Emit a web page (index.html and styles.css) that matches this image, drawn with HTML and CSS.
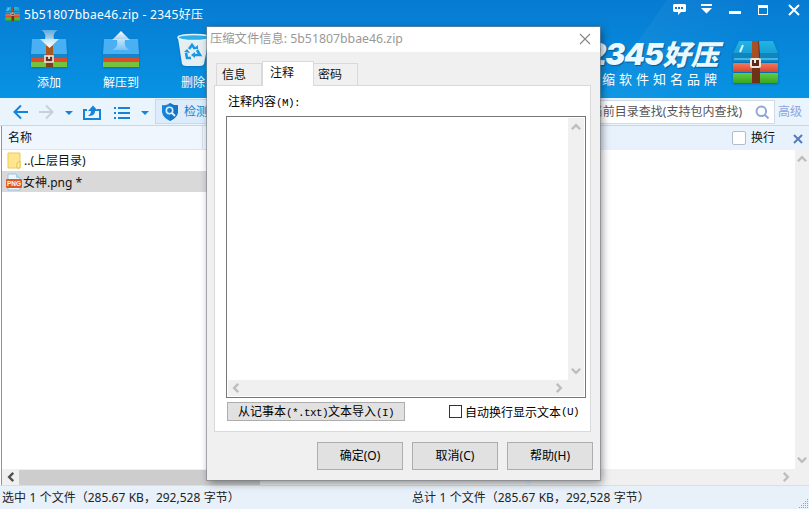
FILE: index.html
```html
<!DOCTYPE html>
<html lang="zh-CN">
<head>
<meta charset="utf-8">
<title>5b51807bbae46.zip - 2345好压</title>
<link rel="stylesheet" href="styles.css">
</head>
<body>
<svg width="0" height="0" class="defs" aria-hidden="true">
  <defs>
    <linearGradient id="arrow" x1="0" y1="0" x2="0" y2="1"><stop offset="0" stop-color="#fff" stop-opacity=".35"/><stop offset="1" stop-color="#fff"/></linearGradient>
    <linearGradient id="arrowUp" x1="0" y1="1" x2="0" y2="0"><stop offset="0" stop-color="#fff" stop-opacity=".25"/><stop offset="1" stop-color="#fff"/></linearGradient>
    <linearGradient id="cyan" x1="0" y1="0" x2="0" y2="1"><stop offset="0" stop-color="#22b4e4"/><stop offset="1" stop-color="#18a0d6"/></linearGradient>
    <linearGradient id="red" x1="0" y1="0" x2="0" y2="1"><stop offset="0" stop-color="#f5785a"/><stop offset="1" stop-color="#d9452c"/></linearGradient>
    <linearGradient id="green" x1="0" y1="0" x2="0" y2="1"><stop offset="0" stop-color="#62cc40"/><stop offset="1" stop-color="#38a624"/></linearGradient>
    <symbol id="up" viewBox="0 0 8 6"><path d="M.7 4.800 4 1.500l3.300 3.300" fill="none" stroke="currentColor" stroke-width="1.900"/></symbol>
    <symbol id="books" viewBox="0 0 46 43">
      <path d="M7 0h34l5 12H1z" fill="url(#cyan)"/><path d="M1 12h45v9H1z" fill="#1184bb"/><path d="M2 17h44v2H2z" fill="#3fb5e6"/>
      <rect x="1" y="22" width="45" height="9" rx="1" fill="url(#red)"/><rect x="1" y="32" width="45" height="10" rx="1" fill="url(#green)"/>
      <path d="M20 0h7l1 14v28h-8z" fill="#713118"/><path d="M20 0h6l1 17h-7z" fill="#a85025"/>
      <rect x="19" y="18" width="9" height="8" rx="1" fill="#5b2716" stroke="#eee4dc" stroke-width="2"/><path d="M23 18v4" stroke="#eee" stroke-width="2"/>
      <path d="m8 11 3-7" stroke="#d9f4ff" stroke-width="2"/>
    </symbol>
  </defs>
</svg>
<div class="window">
  <header class="head">
    <div class="titlebar">
      <svg class="appicon" viewBox="0 0 46 43" preserveAspectRatio="none"><use href="#books"/></svg>
      <span class="apptitle">5b51807bbae46.zip - 2345好压</span>
      <svg class="winctl" width="128" height="20" viewBox="0 0 128 20" fill="#fff">
        <path d="M1 4h11l1 1v6l-1 1H8l-3 3v-3H1l-1-1V5z"/><path d="M2 7h2v2H2zM5 7h2v2H5zM8 7h2v2H8z" fill="#0a78d2"/>
        <path d="M28 4h11v2H28zM28 8h11l-5.500 5.500z"/><path d="M56 11h12v3H56z"/>
        <path d="M85 5h10v10H85zM86 8v6h8V8z" fill-rule="evenodd"/>
        <path d="m116 5 10 10m0-10-10 10" stroke="#fff" stroke-width="2"/>
      </svg>
    </div>
    <div class="mainbar">
      <div class="tool">
        <svg width="38" height="40" viewBox="0 0 38 40"><path d="M2 10h34l1 15H1z" fill="#49b0f4"/><path d="M1 25h36v4H1z" fill="#1485c9"/><path d="M1 29h36v4H1z" fill="#d84d2c"/><path d="M1 33h36v5H1z" fill="#76c23c"/><path d="M16 17h7v21h-7z" fill="#a9571c"/><path d="M16 31h7v7h-7z" fill="#7d3e1a"/><path d="M11 1h17c-4 2-5 6-4 9h5l-9.500 9L10 10h5c1-3 0-7-4-9" fill="url(#arrow)"/><rect x="15" y="27" width="8" height="6" fill="#673023" stroke="#eee6df" stroke-width="1.600"/><path d="M19 27v3" stroke="#fff" stroke-width="1.500"/></svg>
        <span>添加</span>
      </div>
      <div class="tool">
        <svg width="38" height="40" viewBox="0 0 38 40"><path d="M2 10h34l1 15H1z" fill="#49b0f4"/><path d="M1 25h36v4H1z" fill="#1485c9"/><path d="M1 29h36v4H1z" fill="#d84d2c"/><path d="M1 33h36v5H1z" fill="#76c23c"/><path d="M10 21c5-2 6-6 5-10h-5l9-9 9 9h-5c-1 4 0 8 5 10z" fill="url(#arrowUp)"/></svg>
        <span>解压到</span>
      </div>
      <div class="tool">
        <svg width="38" height="40" viewBox="0 0 38 40"><path d="m4 9 4 26q1 2 4 2h14q3 0 4-2l5-26z" fill="#e6eef2"/><ellipse cx="20" cy="8.500" rx="16" ry="3" fill="#2faee8" stroke="#dff5ff" stroke-width="1.500"/><g fill="none" stroke="#1899e2" stroke-width="2.600"><path d="m15 20 3-4 3 4M23 21l3 5h-5M17 29h-4l-1-5"/></g><path d="M19 20h5v-4zM21 23v6l-4-3zM10 23l3-3 3 4z" fill="#1899e2"/></svg>
        <span>删除</span>
      </div>
      <div class="brand">
        <div class="brandtext"><b><span>2345</span>好压</b><i>压缩软件知名品牌</i></div>
        <svg class="books" width="46" height="43"><use href="#books"/></svg>
      </div>
    </div>
  </header>
  <nav class="nav">
    <svg width="160" height="27" viewBox="0 0 160 27" fill="none" stroke="#1583d8" stroke-width="2">
      <path d="M28 14H15m6-6.500L14.500 14l6.500 6.500"/><path d="M39 14h13m-6-6.500 6.500 6.500-6.500 6.500" stroke="#c9cfda"/>
      <path d="M65 13h8l-4 4zM141 13h8l-4 4z" fill="#1583d8" stroke="none"/>
      <path d="M87 12h-3v9h16v-9h-3"/><path d="M88 18c1-1 3-2 3-5h-3l5-5.500 5 5.500h-3c0 4-3 5-7 5" fill="#1583d8" stroke="none"/>
      <path d="M118 10h12M118 15h12M118 20h12M114 10h2M114 15h2M114 20h2"/>
    </svg>
    <div class="scan"><svg width="18" height="20" viewBox="0 0 18 20"><path d="M9 1q4 3 8 2v7q-1 6-8 9-7-3-8-9V3q4 1 8-2z" fill="#1683db"/><path d="M9 1q4 3 8 2v7q-1 6-8 9z" fill="#1474c5"/><circle cx="8.500" cy="8.500" r="3.200" fill="none" stroke="#d9efff" stroke-width="1.600"/><path d="m11 11 3 3" stroke="#d9efff" stroke-width="2"/></svg><span>检测</span></div>
    <div class="search"><span>当前目录查找(支持包内查找)</span><svg width="15" height="15" viewBox="0 0 15 15" fill="none" stroke="#8fa5db" stroke-width="2"><circle cx="6.300" cy="6.300" r="4.800"/><path d="m10 10 3.500 3.500"/></svg></div>
    <span class="adv">高级</span>
  </nav>
  <main class="body">
    <section class="files">
      <div class="colhead"><span>名称</span></div>
      <div class="rows">
        <div class="row"><svg width="15" height="18" viewBox="0 0 15 18"><path d="M1 1h12v15H1z" fill="#ffe58e" stroke="#ebcb55"/><path d="M10 16v-5l3-2v7z" fill="#fff0af" stroke="#e6c346"/></svg><span class="up">..(上层目录)</span></div>
        <div class="row selected"><svg width="16" height="18" viewBox="0 0 16 18"><path d="M2 1h8l4 4v12H2z" fill="#edf6fc" stroke="#9ac5e2"/><path d="M10 1v4h4" fill="#a6d6f2"/><rect y="6" width="16" height="9" rx="1" fill="#de5a24"/><text class="pngtag" x="1" y="13.300" textLength="14" lengthAdjust="spacingAndGlyphs">PNG</text></svg><span class="png">女神.png *</span></div>
      </div>
      <div class="hscroll"><svg class="dark turnleft" width="10" height="8"><use href="#up"/></svg><div class="thumb"></div></div>
    </section>
    <div class="split"></div>
    <section class="preview">
      <div class="previewhead"><i class="check"></i><span>换行</span><svg width="10" height="10" viewBox="0 0 10 10"><path d="m1 1 8 8m0-8L1 9" stroke="#527dbb" stroke-width="2"/></svg></div>
      <div class="previewbody"><div class="vscroll"><svg width="10" height="8"><use href="#up"/></svg><svg class="turndown" width="10" height="8"><use href="#up"/></svg></div></div>
      <div class="phscroll"><svg class="turnright" width="10" height="8"><use href="#up"/></svg></div>
    </section>
  </main>
  <footer class="status">
    <span class="s1">选中 1 个文件（285.67 KB，292,528 字节）</span><span class="s2">总计 1 个文件（285.67 KB，292,528 字节）</span>
    <svg class="grip" width="10" height="10" fill="#9ba4ad"><path d="M8 0h1v1H8zM6 2h1v1H6zM8 2h1v1H8zM4 4h1v1H4zM6 4h1v1H6zM8 4h1v1H8zM2 6h1v1H2zM4 6h1v1H4zM6 6h1v1H6zM8 6h1v1H8zM0 8h1v1H0zM2 8h1v1H2zM4 8h1v1H4zM6 8h1v1H6zM8 8h1v1H8z"/></svg>
  </footer>
</div>
<div class="dialog" role="dialog">
  <div class="dtitle"><span>压缩文件信息: 5b51807bbae46.zip</span><svg width="12" height="12" viewBox="0 0 12 12"><path d="m1 1 10 10m0-10L1 11" stroke="#858585" stroke-width="1.100"/></svg></div>
  <div class="tabs"><span class="tab">信息</span><span class="tab active">注释</span><span class="tab last">密码</span></div>
  <div class="panel">
    <label class="label mono">注释内容<span>(M):</span></label>
    <div class="memo">
      <div class="mv"><svg width="10" height="8"><use href="#up"/></svg><svg class="turndown" width="10" height="8"><use href="#up"/></svg></div>
      <div class="mh"><svg class="turnleft" width="10" height="8"><use href="#up"/></svg><svg class="turnright" width="10" height="8"><use href="#up"/></svg></div>
    </div>
    <div class="options"><button class="import mono">从记事本<span>(*.txt)</span>文本导入<span>(I)</span></button><label class="wrap mono"><i></i>自动换行显示文本<span>(U)</span></label></div>
  </div>
  <div class="actions"><button>确定(O)</button><button>取消(C)</button><button>帮助(H)</button></div>
</div>
</body>
</html>
```
FILE: styles.css
```css
* { box-sizing: border-box; }
body { margin: 0; width: 809px; height: 509px; overflow: hidden; font: 12px/16px "Noto Sans", "Noto Sans CJK SC", sans-serif; color: #111; white-space: nowrap; position: relative; }
svg { display: block; flex: none; }
.defs { position: absolute; }
.window { height: 509px; display: flex; flex-direction: column; background: #e8f1fa; }
.head { height: 98px; flex: none; color: #fff; background: linear-gradient(125deg, transparent 76%, #ffffff0a 76%, transparent 88%), linear-gradient(#067bd2, #0893e3); }
.titlebar { height: 29px; display: flex; align-items: flex-start; padding: 0 8px 0 5px; }
.appicon { width: 15px; height: 14px; margin-top: 7px; }
.apptitle { margin: 7px 0 0 4px; font-size: 12px; letter-spacing: .3px; }
.winctl { margin-left: auto; }
.mainbar { height: 69px; display: flex; }
.tool { width: 72px; flex: none; display: flex; flex-direction: column; align-items: center; }
.tool:first-child { margin-left: 13px; }
.tool span { margin-top: 6px; }
.tool svg { filter: drop-shadow(0 1px 1px #0058a080); }
.brand { margin-left: auto; display: flex; padding: 9px 31px 0 0; }
.brandtext { width: 144px; display: flex; flex-direction: column; }
.brandtext b { height: 31px; font: italic 900 28px/31px "Noto Sans CJK SC", sans-serif; color: #eaf8ff; text-shadow: 1px 1px 1px #075b99; }
.brandtext b span { display: inline-block; font: italic 900 30px/31px Inter, "Open Sans", sans-serif; letter-spacing: -1.2px; margin-left: 1px; }
.brandtext i { font: oblique 8deg 400 13px/15px "Noto Sans CJK SC", sans-serif; letter-spacing: 4px; margin: 2px 0 0 -1px; }
.books { margin: 3px 0 0 2px; filter: drop-shadow(0 1px 1px #004c8099); }
.nav { height: 28px; flex: none; display: flex; align-items: flex-start; background: #eaf4fd; border-bottom: 1px solid #c7d7e7; }
.nav > svg { margin-right: -5px; }
.scan { width: 70px; height: 25px; display: flex; align-items: center; gap: 5px; padding-left: 5px; background: #dcecfb; border: 1px solid #c6d9ed; color: #187bca; margin-top: 1px; }
.search { margin: 2px 3px 0 auto; width: 187px; height: 24px; border: 1px solid #cddbea; background: #fff; display: flex; align-items: center; justify-content: flex-end; gap: 13px; padding-right: 4px; color: #555; }
.adv { margin: 6px 7px 0 0; color: #8ba5dc; }
.body { height: 359px; flex: none; display: flex; background: #fff; }
.files { width: 525px; display: flex; flex-direction: column; border-left: 1px solid #8795a9; margin-left: 1px; }
.colhead { height: 24px; border-bottom: 1px solid #dbe6f1; background: #eff6fe; display: flex; }
.colhead span { width: 201px; padding: 4px 6px; border-right: 1px solid #d5e1ed; }
.rows { flex: 1; }
.row { height: 21px; display: flex; align-items: center; padding-left: 5px; }
.row.selected { background: #d9d9d9; padding-left: 4px; }
.up { margin-left: 2px; }
.png { margin: 2px 0 0 1px; }
.pngtag { font: bold 7px "Liberation Sans", sans-serif; fill: #fff; }
.hscroll { height: 16px; background: #f0f0f0; display: flex; align-items: center; }
.dark { color: #505050; }
.hscroll svg { margin: 0 3px 0 4px; }
.thumb { width: 241px; height: 15px; background: #cdcdcd; }
.turnleft { transform: rotate(-90deg); }
.turnright { transform: rotate(90deg); }
.turndown { transform: rotate(180deg); }
.split { width: 5px; background: #e1edf8; }
.preview { flex: 1; display: flex; flex-direction: column; color: #bdbdbd; }
.previewhead { height: 24px; background: #e7f2fd; display: flex; align-items: center; justify-content: flex-end; padding-right: 6px; color: #111; }
.previewhead svg { margin: 1px 0 0 18px; }
.check { width: 14px; height: 14px; background: #fff; border: 1px solid #b1bdc9; border-radius: 2px; margin-right: 5px; }
.previewbody { flex: 1; display: flex; justify-content: flex-end; }
.vscroll { width: 14px; display: flex; flex-direction: column; align-items: center; justify-content: space-between; background: #f0f0f0; padding: 5px 0; }
.phscroll { height: 16px; background: #f0f0f0; display: flex; align-items: center; justify-content: flex-end; padding-right: 18px; }
.status { height: 24px; flex: none; display: flex; align-items: center; border-top: 1px solid #d3dfe9; padding: 1px 0 0 2px; background: #e8f1fa; color: #222; }
.s1 { width: 410px; }
.s1, .s2 { word-spacing: .3px; }
.grip { margin: 11px 0 0 auto; }
.dialog { position: absolute; left: 207px; top: 27px; width: 393px; height: 453px; background: #f0f0f0; box-shadow: 0 0 0 1px #7c8389a0, 2px 3px 8px #00000070; display: flex; flex-direction: column; }
.dtitle { height: 25px; flex: none; background: #fff; color: #999; display: flex; justify-content: space-between; padding: 4px 9px 0 3px; font-size: 12.300px; }
.dtitle svg { margin-top: 2px; }
.tabs { height: 33px; flex: none; display: flex; align-items: flex-end; padding-left: 9px; }
.tab { width: 46px; height: 22px; border: 1px solid #d9d9d9; border-bottom: 0; padding: 3px 0 0 5px; }
.tab.active { width: 52px; height: 25px; background: #fff; margin: 0 0 -1px; padding: 3px 0 0 7px; position: relative; }
.tab.last { width: 44px; border-left: 0; padding-left: 4px; }
.panel { width: 377px; height: 347px; margin-left: 7px; background: #fff; border: 1px solid #d9d9d9; padding: 0 5px 0 11px; }
.mono { font: 12px/16px "Noto Sans CJK SC", sans-serif; color: #000; }
.mono span { font-family: "Liberation Mono", monospace; font-size: 11px; letter-spacing: -.6px; }
.label { display: block; height: 30px; padding: 7px 0 0 2px; }
.memo { width: 360px; height: 282px; border: 1px solid #777; padding: 1px; display: flex; flex-direction: column; color: #bdbdbd; }
.mv { width: 16px; height: 262px; align-self: flex-end; display: flex; flex-direction: column; align-items: center; justify-content: space-between; padding: 5px 0; background: #f0f0f0; }
.mh { height: 16px; background: #f0f0f0; display: flex; align-items: center; justify-content: space-between; padding: 0 20px 0 3px; }
.options { display: flex; justify-content: space-between; padding: 4px 6px 0 1px; }
button { background: #e1e1e1; border: 1px solid #adadad; padding: 0; font: inherit; color: #000; }
.import { width: 178px; height: 19px; line-height: 16px; }
.wrap { display: flex; align-items: center; height: 19px; }
.wrap i { width: 13px; height: 13px; border: 1px solid #333; background: #fff; margin-right: 3px; }
.actions { display: flex; gap: 9px; margin: 10px 0 0 110px; }
.actions button { width: 86px; height: 28px; }
```
